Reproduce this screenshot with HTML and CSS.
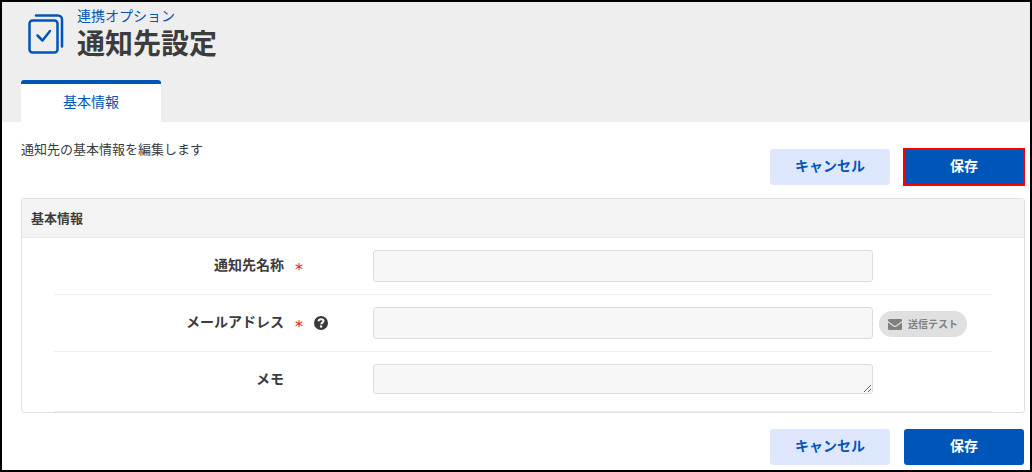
FILE: index.html
```html
<!DOCTYPE html>
<html lang="ja">
<head>
  <meta charset="UTF-8">
  <meta name="viewport" content="width=device-width, initial-scale=1.0">
  <title>通知先設定</title>
  <link rel="stylesheet" href="styles.css">
</head>
<body>
  <header class="page-header">
    <div class="page-title">
      <svg class="page-icon" width="38" height="42" viewBox="0 0 38 42" fill="none" stroke="#0056b8" stroke-width="2.500" stroke-linecap="round" stroke-linejoin="round">
        <rect x="2.500" y="7.500" width="28" height="32" rx="3"/>
        <path d="M9 2.500h22a4 4 0 0 1 4 4v27"/>
        <path d="M10.500 22.500l5 5 7.500-9.500"/>
      </svg>
      <div>
        <p class="category">連携オプション</p>
        <h1>通知先設定</h1>
      </div>
    </div>
    <nav class="tabs">
      <a href="#" class="tab">基本情報</a>
    </nav>
  </header>

  <main>
    <form>
      <div class="toolbar">
        <p class="description">通知先の基本情報を編集します</p>
        <div class="actions">
          <button type="button" class="btn btn-cancel">キャンセル</button>
          <button type="submit" class="btn btn-save highlight">保存</button>
        </div>
      </div>

      <section class="panel">
        <h2>基本情報</h2>
        <div class="rows">
          <div class="row">
            <label for="name">通知先名称</label>
            <div class="marks"><span class="required">*</span></div>
            <div class="field"><input type="text" id="name"></div>
          </div>
          <div class="row">
            <label for="mail">メールアドレス</label>
            <div class="marks">
              <span class="required">*</span>
              <button type="button" class="help" aria-label="ヘルプ">
                <svg width="14" height="14" viewBox="0 0 14 14">
                  <circle cx="7" cy="7" r="7" fill="#3a3a3a"/>
                  <path d="M4.400 5.300C4.700 3.700 5.700 3.200 7.100 3.200c1.500 0 2.400.800 2.400 1.900 0 1.600-2.300 1.600-2.300 3.100" fill="none" stroke="#fff" stroke-width="1.900"/>
                  <circle cx="7.100" cy="10.500" r="1.200" fill="#fff"/>
                </svg>
              </button>
            </div>
            <div class="field">
              <input type="text" id="mail">
              <button type="button" class="send-test" disabled>
                <svg width="14" height="11" viewBox="0 0 14 11" fill="#808080">
                  <path d="M1.200 0h11.600A1.200 1.200 0 0 1 14 1.200v.900L8 6.600q-1 .700-2 0L0 2.100v-.900A1.200 1.200 0 0 1 1.200 0z"/>
                  <path d="M0 3.500l5.300 4q1.700 1.200 3.400 0l5.300-4v6.300A1.200 1.200 0 0 1 12.800 11H1.200A1.200 1.200 0 0 1 0 9.800z"/>
                </svg>
                <span>送信テスト</span>
              </button>
            </div>
          </div>
          <div class="row row-memo">
            <label for="memo">メモ</label>
            <div class="field"><textarea id="memo"></textarea></div>
          </div>
        </div>
      </section>

      <div class="actions actions-bottom">
        <button type="button" class="btn btn-cancel">キャンセル</button>
        <button type="submit" class="btn btn-save">保存</button>
      </div>
    </form>
  </main>
</body>
</html>
```

FILE: styles.css
```css
* {
  box-sizing: border-box;
}

body {
  margin: 0;
  min-height: 100vh;
  border: 2px solid #000;
  background-color: #fff;
  color: #3c3c3c;
  font-family: "Noto Sans CJK JP", sans-serif;
  font-size: 14px;
  line-height: 20px;
}

h1, h2, p {
  margin: 0;
}

button, input, textarea {
  font-family: inherit;
}

.page-header {
  padding: 3px 19px 0;
  background-color: #eee;
}

.page-title {
  display: flex;
  gap: 12px;
  padding-left: 6px;
}

.page-icon {
  margin-top: 8px;
}

.category {
  color: #0056b8;
}

h1 {
  font-size: 28px;
  line-height: 34px;
}

.tabs {
  display: flex;
  padding-top: 21px;
}

.tab {
  width: 140px;
  height: 42px;
  border-top: 4px solid #0056b8;
  border-radius: 3px 3px 0 0;
  background-color: #fff;
  color: #0056b8;
  line-height: 34px;
  text-align: center;
  text-decoration: none;
}

main {
  padding: 17px 5px 5px 19px;
}

.toolbar {
  display: flex;
  justify-content: space-between;
}

.description {
  font-size: 13px;
}

.actions {
  display: flex;
  justify-content: flex-end;
  gap: 14px;
  padding-right: 1px;
}

.toolbar .actions {
  padding-top: 10px;
}

.btn {
  width: 120px;
  height: 36px;
  padding: 0 0 4px;
  border: 0;
  border-radius: 3px;
  font-size: 14px;
  font-weight: bold;
  line-height: 32px;
}

.btn-cancel {
  background-color: #dfe7ff;
  color: #0056b8;
}

.btn-save {
  background-color: #0056b8;
  color: #fff;
}

.highlight {
  border-radius: 0;
  outline: 2px solid #f00;
  outline-offset: -1px;
}

.panel {
  margin-top: 13px;
  border: 1px solid #e1e1e1;
  border-radius: 3px;
}

h2 {
  padding: 0 9px;
  border-bottom: 1px solid #eee;
  background-color: #f4f4f4;
  font-size: 13px;
  line-height: 38px;
}

.rows {
  padding: 0 32px;
}

.row {
  display: grid;
  grid-template-columns: 230px 89px 1fr;
  padding: 12px 0;
  border-bottom: 1px solid #eee;
}

.row-memo {
  padding-bottom: 17px;
}

.row label {
  font-weight: bold;
  line-height: 28px;
  text-align: right;
}

.marks {
  display: flex;
  align-items: center;
  gap: 11px;
  height: 32px;
  padding-left: 11px;
}

.required {
  width: 8px;
  padding-top: 8px;
  color: #d9232e;
  font-family: "DejaVu Sans", sans-serif;
  font-size: 16px;
}

.help {
  display: flex;
  padding: 0;
  border: 0;
  background: none;
}

.field {
  display: flex;
  grid-column: 3;
  align-items: flex-start;
  gap: 6px;
}

.field input, .field textarea {
  display: block;
  width: 500px;
  height: 32px;
  padding: 4px 8px;
  border: 1px solid #ddd;
  border-radius: 3px;
  background-color: #f7f7f7;
  font-size: 14px;
}

.field textarea {
  height: 30px;
  resize: vertical;
}

.send-test {
  display: flex;
  align-items: center;
  gap: 6px;
  height: 26px;
  margin-top: 4px;
  padding: 0 9px;
  border: 0;
  border-radius: 13px;
  background-color: #e0e0e0;
  color: #808080;
  font-size: 10px;
  font-weight: bold;
  white-space: nowrap;
}

.send-test span {
  padding-bottom: 2px;
}

.actions-bottom {
  margin-top: 16px;
}
```
